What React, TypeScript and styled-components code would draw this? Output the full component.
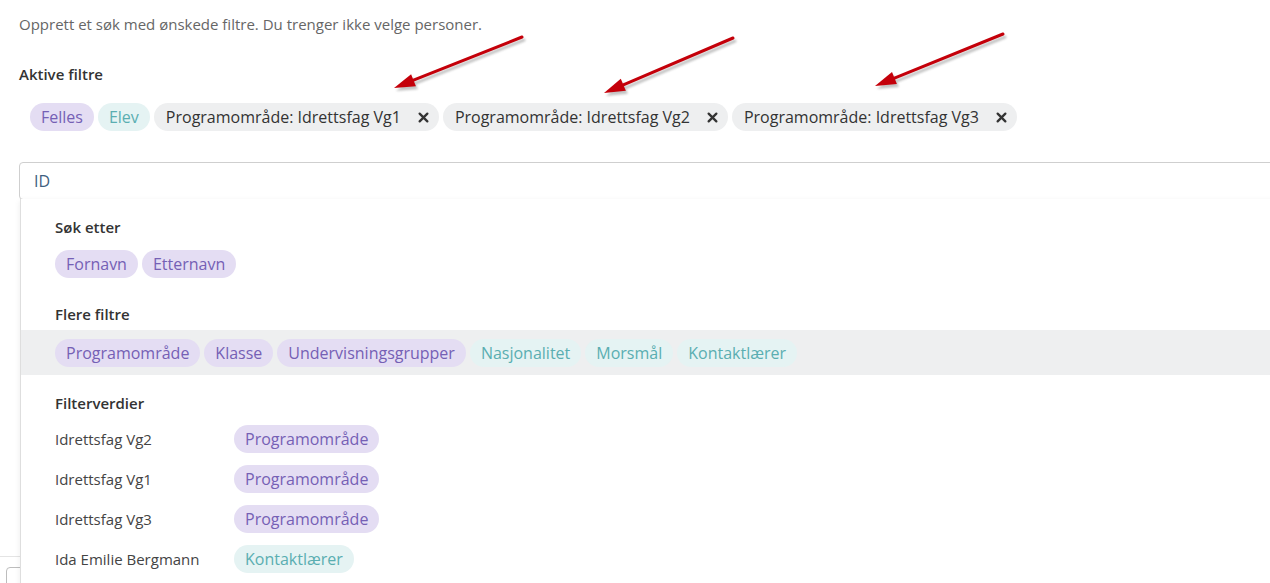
import React from "react";
import styled, { createGlobalStyle, css } from "styled-components";

const GlobalStyle = createGlobalStyle`
  html, body { margin: 0; padding: 0; background: #fff; overflow: hidden; }
  body { font-family: "Open Sans", "Noto Sans", Arial, sans-serif; color: #333; }
  * { box-sizing: border-box; }
`;

const Page = styled.div`
  position: relative;
  width: 1270px;
  height: 583px;
  padding: 14px 0 0 19px;
  overflow: hidden;
`;

const Intro = styled.p`
  margin: 0;
  font-size: 15px;
  line-height: 20px;
  color: #666;
`;

const SectionTitle = styled.h4<{ $top?: number }>`
  margin: ${(p) => p.$top ?? 0}px 0 0 0;
  font-size: 15px;
  line-height: 20px;
  font-weight: 600;
  color: #333;
`;

const ChipRow = styled.div<{ $top?: number; $indent?: number }>`
  display: flex;
  align-items: center;
  gap: 4px;
  margin-top: ${(p) => p.$top ?? 0}px;
  padding-left: ${(p) => p.$indent ?? 0}px;
`;

type Tone = "purple" | "teal" | "gray";

const tones = {
  purple: css`
    background: #e4ddf3;
    color: #7560b5;
  `,
  teal: css`
    background: #e5f3f3;
    color: #5aaeb1;
  `,
  gray: css`
    background: #eeeff0;
    color: #333;
  `,
};

const Chip = styled.span<{ $tone: Tone }>`
  display: inline-flex;
  align-items: center;
  height: 28px;
  padding: 0 11px;
  border-radius: 14px;
  font-size: 16px;
  line-height: 28px;
  white-space: nowrap;
  ${(p) => tones[p.$tone]}
`;

const FilterChip = styled(Chip)`
  padding: 0 10px 0 12px;
  gap: 17px;
`;

const CloseIcon = styled.svg`
  width: 11px;
  height: 11px;
  display: block;
`;

const InputWrap = styled.div`
  position: relative;
  margin-top: 31px;
  width: 1300px;
`;

const SearchInput = styled.div`
  height: 38px;
  border: 1px solid #cfcfcf;
  border-radius: 4px;
  padding: 0 14px;
  font-size: 16px;
  line-height: 36px;
  color: #3f5f80;
  background: #fff;
`;

const Dropdown = styled.div`
  position: absolute;
  top: 37px;
  left: 1px;
  width: 1300px;
  height: 420px;
  background: #fff;
  border: 1px solid #dedede;
  border-top: none;
  box-shadow: 0 2px 6px rgba(0, 0, 0, 0.08);
  padding-top: 18px;
  z-index: 2;
`;

const Block = styled.div`
  padding-left: 34px;
`;

const HighlightRow = styled.div`
  display: flex;
  align-items: center;
  gap: 4px;
  height: 45px;
  margin-top: 6px;
  padding: 1px 0 0 34px;
  background: #eeeff0;
`;

const ValueList = styled.div`
  margin-top: 6px;
  padding-left: 34px;
`;

const ValueRow = styled.div`
  display: flex;
  align-items: center;
  height: 40px;
`;

const ValueLabel = styled.span`
  width: 179px;
  font-size: 15px;
  color: #444;
`;

const Below = styled.div`
  margin: 356px 0 0 -19px;
  border-top: 1px solid #e4e4e4;
  height: 40px;
  padding: 10px 0 0 6px;
`;

const BelowBox = styled.div`
  width: 40px;
  height: 30px;
  border: 1px solid #bdbdbd;
  border-radius: 4px;
`;

const Annotations = styled.svg`
  position: absolute;
  left: 0;
  top: 0;
  width: 1270px;
  height: 583px;
  pointer-events: none;
  z-index: 5;
`;

const Close = () => (
  <CloseIcon viewBox="0 0 10 10">
    <path d="M1.5 1.5 L8.5 8.5 M8.5 1.5 L1.5 8.5" stroke="#333" strokeWidth="2.1" strokeLinecap="round" />
  </CloseIcon>
);

const Arrow = ({ x1, y1, x2, y2 }: { x1: number; y1: number; x2: number; y2: number }) => {
  const dx = x2 - x1;
  const dy = y2 - y1;
  const len = Math.hypot(dx, dy);
  const ux = dx / len;
  const uy = dy / len;
  const nx = uy;
  const ny = -ux;
  const hl = 21;
  const hw = 6.5;
  const bx = x2 - hl * ux;
  const by = y2 - hl * uy;
  const pts = `${x2},${y2} ${bx + hw * nx},${by + hw * ny} ${bx - hw * nx},${by - hw * ny}`;
  return (
    <g>
      <g transform="translate(2,3)" opacity="0.35" filter="url(#blur)">
        <line x1={x1} y1={y1} x2={bx} y2={by} stroke="#555" strokeWidth="3" strokeLinecap="round" />
        <polygon points={pts} fill="#555" />
      </g>
      <line x1={x1} y1={y1} x2={bx} y2={by} stroke="#c4000a" strokeWidth="3" strokeLinecap="round" />
      <polygon points={pts} fill="#c4000a" />
    </g>
  );
};

const activeFilters = ["Idrettsfag Vg1", "Idrettsfag Vg2", "Idrettsfag Vg3"];

const moreFilters: { label: string; tone: Tone }[] = [
  { label: "Programområde", tone: "purple" },
  { label: "Klasse", tone: "purple" },
  { label: "Undervisningsgrupper", tone: "purple" },
  { label: "Nasjonalitet", tone: "teal" },
  { label: "Morsmål", tone: "teal" },
  { label: "Kontaktlærer", tone: "teal" },
];

const values: { label: string; tag: string; tone: Tone }[] = [
  { label: "Idrettsfag Vg2", tag: "Programområde", tone: "purple" },
  { label: "Idrettsfag Vg1", tag: "Programområde", tone: "purple" },
  { label: "Idrettsfag Vg3", tag: "Programområde", tone: "purple" },
  { label: "Ida Emilie Bergmann", tag: "Kontaktlærer", tone: "teal" },
];

export default function App() {
  return (
    <>
      <GlobalStyle />
      <Page>
        <Intro>Opprett et søk med ønskede filtre. Du trenger ikke velge personer.</Intro>
        <SectionTitle $top={30}>Aktive filtre</SectionTitle>
        <ChipRow $top={19} $indent={11}>
          <Chip $tone="purple">Felles</Chip>
          <Chip $tone="teal">Elev</Chip>
          {activeFilters.map((f) => (
            <FilterChip key={f} $tone="gray">
              Programområde: {f}
              <Close />
            </FilterChip>
          ))}
        </ChipRow>
        <InputWrap>
          <SearchInput>ID</SearchInput>
          <Dropdown>
            <Block>
              <SectionTitle>Søk etter</SectionTitle>
              <ChipRow $top={13}>
                <Chip $tone="purple">Fornavn</Chip>
                <Chip $tone="purple">Etternavn</Chip>
              </ChipRow>
              <SectionTitle $top={26}>Flere filtre</SectionTitle>
            </Block>
            <HighlightRow>
              {moreFilters.map((f) => (
                <Chip key={f.label} $tone={f.tone}>
                  {f.label}
                </Chip>
              ))}
            </HighlightRow>
            <Block>
              <SectionTitle $top={18}>Filterverdier</SectionTitle>
            </Block>
            <ValueList>
              {values.map((v) => (
                <ValueRow key={v.label}>
                  <ValueLabel>{v.label}</ValueLabel>
                  <Chip $tone={v.tone}>{v.tag}</Chip>
                </ValueRow>
              ))}
            </ValueList>
          </Dropdown>
        </InputWrap>
        <Below>
          <BelowBox />
        </Below>
        <Annotations viewBox="0 0 1270 583">
          <defs>
            <filter id="blur" x="-10%" y="-10%" width="120%" height="120%">
              <feGaussianBlur stdDeviation="1.2" />
            </filter>
          </defs>
          <Arrow x1={522} y1={37} x2={394} y2={88} />
          <Arrow x1={733} y1={38} x2={604} y2={93} />
          <Arrow x1={1003} y1={34} x2={875} y2={86} />
        </Annotations>
      </Page>
    </>
  );
}
